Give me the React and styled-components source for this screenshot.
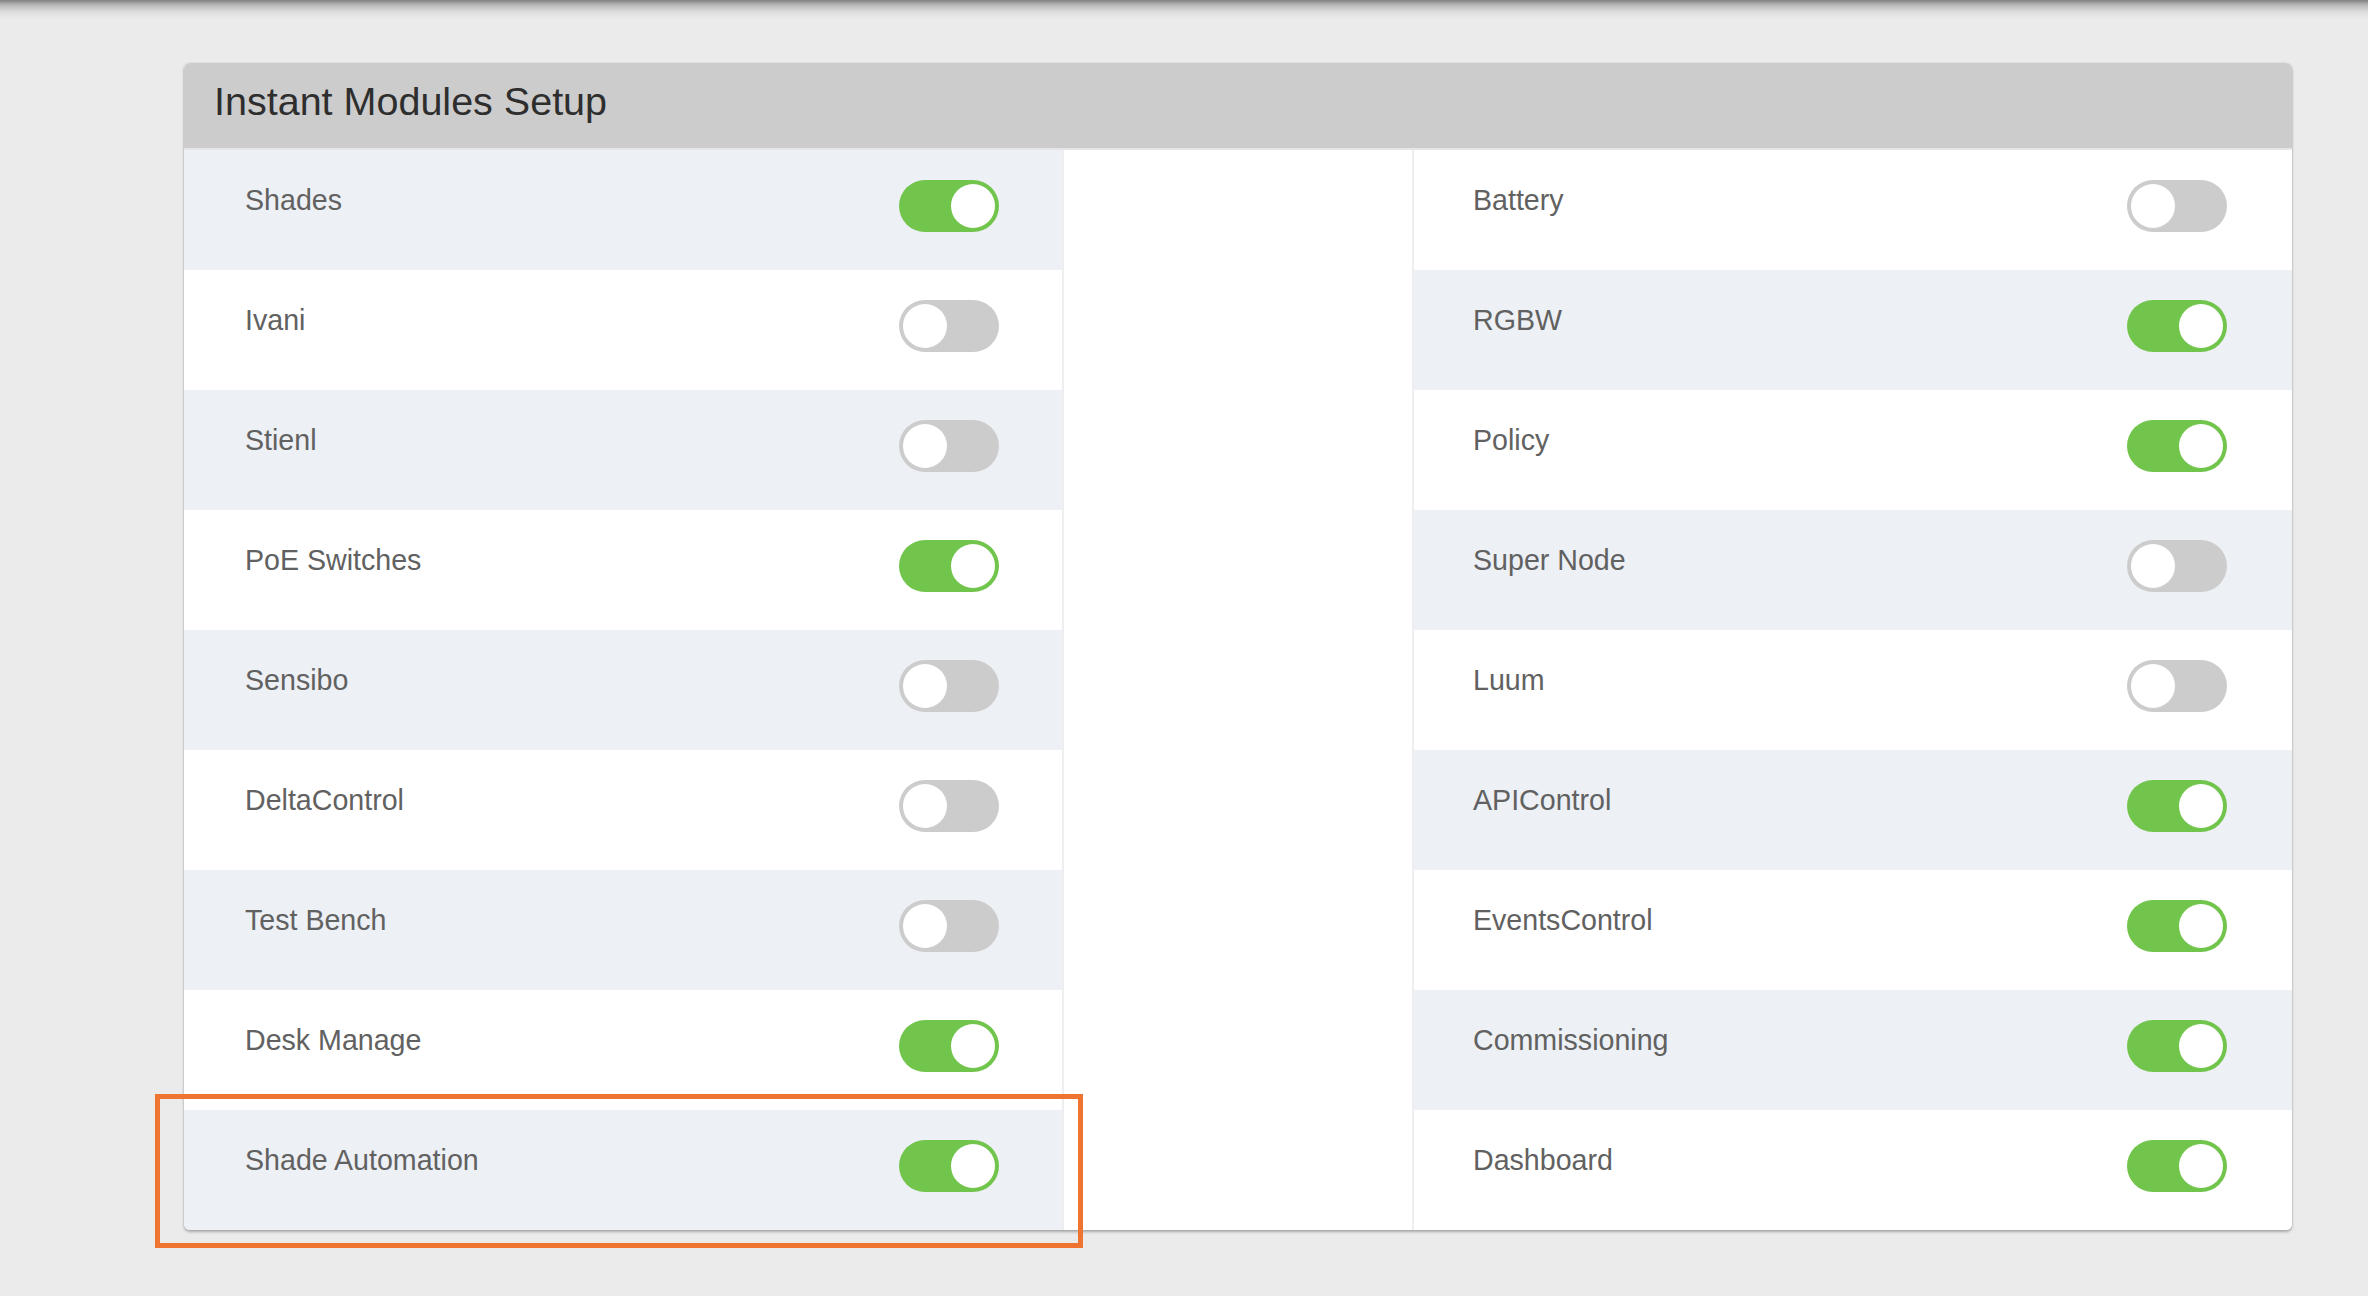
import React from "react";
import styled, { createGlobalStyle } from "styled-components";

const Global = createGlobalStyle`
  html, body { margin: 0; padding: 0; }
  body {
    background: #ebebeb;
    font-family: "Liberation Sans", Arial, Helvetica, sans-serif;
  }
  * { box-sizing: border-box; }
`;

const Page = styled.div`
  position: relative;
  width: 2368px;
  height: 1296px;
  background: #ebebeb;
  overflow: hidden;
`;

const TopShade = styled.div`
  height: 63px;
  background: linear-gradient(
    to bottom,
    rgba(0, 0, 0, 0.45) 0px,
    rgba(0, 0, 0, 0.22) 5px,
    rgba(0, 0, 0, 0.08) 11px,
    rgba(0, 0, 0, 0.02) 16px,
    rgba(0, 0, 0, 0) 20px
  );
`;

const Card = styled.section`
  margin-left: 184px;
  width: 2108px;
  background: #ffffff;
  border-radius: 6px;
  overflow: hidden;
  box-shadow: 0 0 0 1px rgba(0, 0, 0, 0.035), 0 2px 3px rgba(0, 0, 0, 0.28);
`;

const Header = styled.header`
  height: 87px;
  padding: 0 0 0 30px;
  background: #cccccc;
  border-bottom: 2px solid #e6e6e6;
  display: flex;
  align-items: flex-start;
`;

const Title = styled.h1`
  margin: 19px 0 0;
  font-size: 39.5px;
  line-height: 39.5px;
  font-weight: 400;
  color: #2e2e2e;
  letter-spacing: 0;
`;

const Body = styled.div`
  display: grid;
  grid-template-columns: 880px 1fr 880px;
`;

const Column = styled.ul`
  list-style: none;
  margin: 0;
  padding: 0;
  border-left: ${(p) => (p.$side === "right" ? "2px solid #eeeeee" : "none")};
  border-right: ${(p) => (p.$side === "left" ? "2px solid #eeeeee" : "none")};
`;

const Spacer = styled.div`
  background: #ffffff;
`;

const Row = styled.li`
  height: 120px;
  display: flex;
  align-items: flex-start;
  justify-content: space-between;
  padding: 30px ${(p) => (p.$side === "left" ? "63px" : "65px")} 0 ${(p) => (p.$side === "left" ? "61px" : "59px")};
  background: ${(p) => (p.$striped ? "#edf0f4" : "#ffffff")};
`;

const Label = styled.span`
  margin-top: 6px;
  font-size: 28.6px;
  line-height: 28px;
  color: #616161;
`;

const Switch = styled.span`
  position: relative;
  flex: none;
  width: 100px;
  height: 52px;
  border-radius: 26px;
  background: ${(p) => (p.$on ? "#72c54c" : "#cccccc")};
  &::after {
    content: "";
    position: absolute;
    top: 4px;
    left: ${(p) => (p.$on ? "52px" : "4px")};
    width: 44px;
    height: 44px;
    border-radius: 50%;
    background: #ffffff;
  }
`;

const Highlight = styled.div`
  position: absolute;
  left: 155px;
  top: 1094px;
  width: 928px;
  height: 154px;
  border: 5px solid #ee7430;
  pointer-events: none;
`;

const left = [
  ["Shades", true],
  ["Ivani", false],
  ["Stienl", false],
  ["PoE Switches", true],
  ["Sensibo", false],
  ["DeltaControl", false],
  ["Test Bench", false],
  ["Desk Manage", true],
  ["Shade Automation", true],
];

const right = [
  ["Battery", false],
  ["RGBW", true],
  ["Policy", true],
  ["Super Node", false],
  ["Luum", false],
  ["APIControl", true],
  ["EventsControl", true],
  ["Commissioning", true],
  ["Dashboard", true],
];

function ModuleColumn({ items, side, stripeOffset }) {
  return (
    <Column $side={side}>
      {items.map(([name, on], i) => (
        <Row key={name} $side={side} $striped={(i + stripeOffset) % 2 === 0}>
          <Label>{name}</Label>
          <Switch role="switch" aria-checked={on} $on={on} />
        </Row>
      ))}
    </Column>
  );
}

export default function App() {
  return (
    <>
      <Global />
      <Page>
        <TopShade />
        <Card>
          <Header>
            <Title>Instant Modules Setup</Title>
          </Header>
          <Body>
            <ModuleColumn items={left} side="left" stripeOffset={0} />
            <Spacer />
            <ModuleColumn items={right} side="right" stripeOffset={1} />
          </Body>
        </Card>
        <Highlight />
      </Page>
    </>
  );
}
